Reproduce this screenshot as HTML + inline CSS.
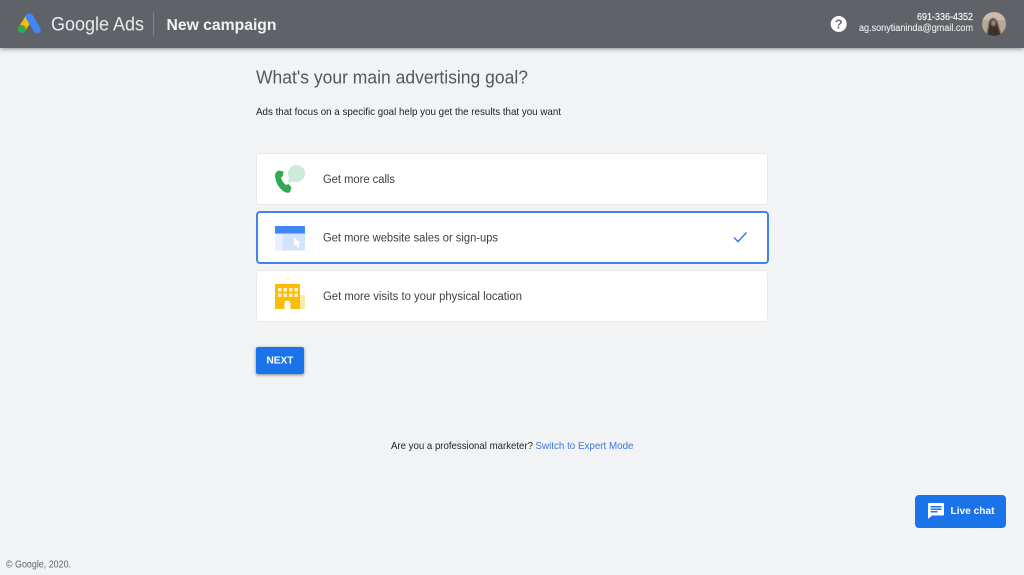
<!DOCTYPE html>
<html lang="en"><head><meta charset="utf-8"><title>Google Ads - New campaign</title>
<style>
html,body{margin:0;padding:0;width:1024px;height:575px;overflow:hidden;background:#f1f3f4;font-family:"Liberation Sans",sans-serif}
.bar{position:absolute;left:0;top:0;width:1024px;height:48px;background:#5f6368;box-shadow:0 1px 4px rgba(60,64,67,.55)}
.card{position:absolute;left:256px;width:510px;background:#fff;border:1px solid #e6e8ea;border-radius:3px}
.sel{left:255.5px;width:509px;border:2px solid #4285e8;border-radius:4px}
.btn{position:absolute;background:#1a73e8}
svg.o{position:absolute;left:0;top:0;filter:blur(.3px)}
text{font-family:"Liberation Sans",sans-serif}
</style></head><body>
<div class="bar"></div>
<div class="card" style="top:153px;height:50px"></div>
<div class="card sel" style="top:211px;height:49px"></div>
<div class="card" style="top:270px;height:50px"></div>
<div class="btn" style="left:255.5px;top:346.5px;width:48px;height:27px;border-radius:2px;box-shadow:0 1px 3px rgba(60,64,67,.6)"></div>
<div class="btn" style="left:914.5px;top:494.5px;width:91.5px;height:33.5px;border-radius:4px"></div>
<svg class="o" width="1024" height="575" viewBox="0 0 1024 575">
<!-- logo -->
<path d="M22 29 L29.500 17" stroke="#fbbc04" stroke-width="7.500" fill="none"/>
<path d="M29.500 17 L37 29.500" stroke="#4285f4" stroke-width="7.500" stroke-linecap="round" fill="none"/>
<circle cx="21.800" cy="29" r="4" fill="#34a853"/>
<text x="51" y="30.500" font-size="19" fill="#e8eaed" textLength="93" lengthAdjust="spacingAndGlyphs">Google Ads</text>
<rect x="153" y="12" width="1" height="24" fill="#80868b"/>
<text x="166.500" y="30" font-size="16" font-weight="700" fill="#f1f3f4" textLength="110" lengthAdjust="spacingAndGlyphs">New campaign</text>
<!-- header right -->
<circle cx="838.700" cy="24" r="8" fill="#fff"/>
<text x="838.700" y="28.500" font-size="13" font-weight="700" fill="#6f7377" text-anchor="middle">?</text>
<text x="973" y="20" font-size="10" fill="#f1f3f4" stroke="#f1f3f4" stroke-width=".2" text-anchor="end" textLength="56" lengthAdjust="spacingAndGlyphs">691-336-4352</text>
<text x="973" y="31" font-size="10" fill="#e8eaed" stroke="#e8eaed" stroke-width=".12" text-anchor="end" textLength="114" lengthAdjust="spacingAndGlyphs">ag.sonytianinda@gmail.com</text>
<defs><clipPath id="av"><circle cx="994" cy="24" r="12"/></clipPath><filter id="sf"><feGaussianBlur stdDeviation=".8"/></filter></defs>
<g clip-path="url(#av)">
<rect x="982" y="12" width="24" height="24" fill="#b8a795"/>
<g filter="url(#sf)">
<path d="M982 12h24v8h-24z" fill="#cbbcad"/>
<path d="M986 38 L988.500 27 Q989 18 993 18 Q997 18 998 25 L1002 38Z" fill="#3a332a"/>
<ellipse cx="993.500" cy="23" rx="2.300" ry="3" fill="#9d8270"/>
</g>
</g>
<!-- headings -->
<text x="256" y="83.500" font-size="18.500" fill="#54585d" textLength="272" lengthAdjust="spacingAndGlyphs">What's your main advertising goal?</text>
<text x="256" y="115" font-size="10.300" fill="#202124" textLength="305" lengthAdjust="spacingAndGlyphs">Ads that focus on a specific goal help you get the results that you want</text>
<!-- phone icon -->
<circle cx="296.500" cy="173.500" r="8.500" fill="#cdeadb"/>
<path d="M289 178 L288 183 L293 181.500Z" fill="#cdeadb"/>
<path d="M279 170.500 L283.500 171.500 L283 176 L281 177.500 Q282 182 286 185 L288.500 184 L291.500 187.500 L290 192 Q287.500 194 283 191 Q275.500 185 275 175 Q275.500 171.500 279 170.500Z" fill="#34a853"/>
<!-- browser icon -->
<rect x="275" y="226" width="30" height="24.500" fill="#e8f0fe"/>
<rect x="282.500" y="233" width="22.500" height="17.500" fill="#d2e3fc"/>
<rect x="275" y="226" width="30" height="7.500" fill="#4285f4"/>
<path d="M294 237.500 L294 246 L296 244.500 L298 248 L299.800 247 L298 243.800 L300.700 243.500Z" fill="#fff"/>
<!-- building icon -->
<rect x="300" y="295" width="5" height="14" fill="#fde9ad"/>
<rect x="275" y="284" width="25" height="25" fill="#fbbc04"/>
<g fill="#fff3cf">
<rect x="278" y="288" width="3.500" height="3.500"/><rect x="283.500" y="288" width="3.500" height="3.500"/><rect x="289" y="288" width="3.500" height="3.500"/><rect x="294.500" y="288" width="3.500" height="3.500"/>
<rect x="278" y="293.500" width="3.500" height="3.500"/><rect x="283.500" y="293.500" width="3.500" height="3.500"/><rect x="289" y="293.500" width="3.500" height="3.500"/><rect x="294.500" y="293.500" width="3.500" height="3.500"/>
<path d="M284.500 309 V303.500 A3 3 0 0 1 290.500 303.500 V309Z" fill="#fff"/>
</g>
<!-- card text -->
<text x="323" y="183" font-size="11.500" fill="#3c4043" textLength="72" lengthAdjust="spacingAndGlyphs">Get more calls</text>
<text x="323" y="241.500" font-size="11.500" fill="#3c4043" textLength="175" lengthAdjust="spacingAndGlyphs">Get more website sales or sign-ups</text>
<text x="323" y="300" font-size="11.500" fill="#3c4043" textLength="199" lengthAdjust="spacingAndGlyphs">Get more visits to your physical location</text>
<path d="M734 237.500 L738 241.500 L746.500 232.500" fill="none" stroke="#3f78dc" stroke-width="1.500"/>
<text x="266.500" y="363.500" font-size="10.500" font-weight="700" fill="#fff" textLength="27" lengthAdjust="spacingAndGlyphs">NEXT</text>
<text x="391" y="449" font-size="10.200" fill="#202124" textLength="142" lengthAdjust="spacingAndGlyphs">Are you a professional marketer?</text>
<text x="535.500" y="449" font-size="10.200" fill="#3f78dc" textLength="98" lengthAdjust="spacingAndGlyphs">Switch to Expert Mode</text>
<!-- chat -->
<path d="M929 503 H943 Q944 503 944 504 V514.500 Q944 515.500 943 515.500 H932 L928 519 V504 Q928 503 929 503Z" fill="#fff"/>
<g fill="#1a73e8"><rect x="930.500" y="506" width="11" height="1.500"/><rect x="930.500" y="508.500" width="11" height="1.500"/><rect x="930.500" y="511" width="7" height="1.500"/></g>
<text x="950.500" y="514" font-size="10.500" font-weight="700" fill="#fff" textLength="44" lengthAdjust="spacingAndGlyphs">Live chat</text>
<text x="6" y="567.500" font-size="9.800" fill="#5f6368" textLength="65" lengthAdjust="spacingAndGlyphs">© Google, 2020.</text>
</svg>
</body></html>
